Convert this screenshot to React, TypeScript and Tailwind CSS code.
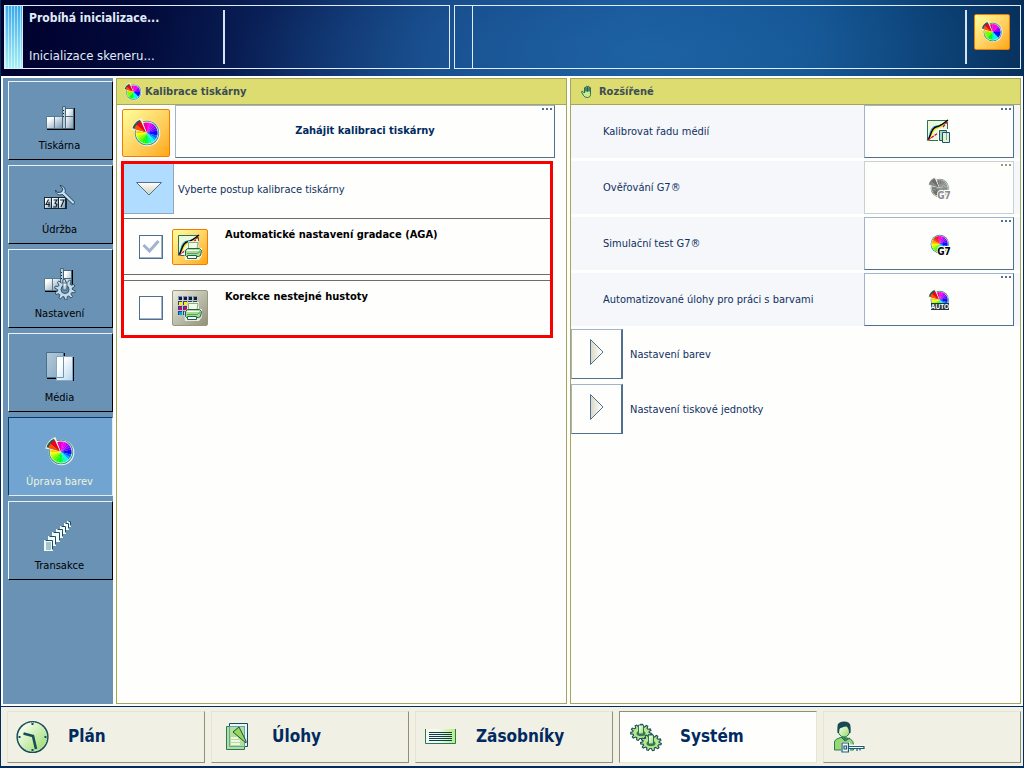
import type { ReactNode } from "react";

import { cva } from "class-variance-authority";
import { clsx } from "clsx";

type IconProps = {
  readonly className?: string;
};

type WheelProps = IconProps & {
  readonly gray?: boolean;
  readonly whole?: boolean;
  readonly steps?: number;
};

function point(cx: number, cy: number, r: number, deg: number) {
  const a = ((deg - 90) * Math.PI) / 180;
  return `${(cx + r * Math.cos(a)).toFixed(2)} ${(cy + r * Math.sin(a)).toFixed(2)}`;
}

function wedge(cx: number, cy: number, r: number, from: number, to: number) {
  const large = to - from > 180 ? 1 : 0;
  return `M${cx} ${cy}L${point(cx, cy, r, from)}A${r} ${r} 0 ${large} 1 ${point(cx, cy, r, to)}Z`;
}

function gear(rx: number, ry: number, depth: number, teeth: number) {
  const step = 360 / teeth;
  const points = Array.from({ length: teeth }, (_, i) =>
    [
      [0, 0],
      [0.2, depth],
      [0.5, depth],
      [0.7, 0],
    ].map(([t, d]) => {
      const a = ((i + t) * step * Math.PI) / 180;
      return `${((rx + d) * Math.cos(a)).toFixed(2)} ${((ry + d) * Math.sin(a)).toFixed(2)}`;
    }),
  );
  return `M${points.flat().join("L")}Z`;
}

/* Hues run clockwise from magenta at the top through blue, cyan, green and yellow. */
function hue(deg: number) {
  const stops = [
    [0, 305],
    [45, 275],
    [90, 235],
    [135, 182],
    [180, 125],
    [225, 90],
    [270, 48],
    [315, 5],
    [360, -55],
  ];
  const i = Math.min(Math.floor(deg / 45), 7);
  const t = (deg - stops[i][0]) / 45;
  return stops[i][1] + (stops[i + 1][1] - stops[i][1]) * t;
}

function ColorWheel({ className, gray, whole, steps = 24 }: WheelProps) {
  const size = 360 / steps;
  const fill = (deg: number) => (gray ? `hsl(0 0% ${48 + 10 * Math.sin(deg / 40)}%)` : `hsl(${hue(deg)} 100% 50%)`);
  const slices = Array.from({ length: steps }, (_, i) => i * size);
  return (
    <svg viewBox="0 1.5 32 32" className={clsx("overflow-visible", className)} aria-hidden="true">
      <circle cx="17.5" cy="18" r="12.8" fill="#eaf6f4" />
      <circle cx="17" cy="17.5" r="12.2" fill={gray ? "#8a8a8a" : "#2a8478"} />
      <circle cx="17" cy="17.5" r="11.4" fill="#e6f5dc" />
      {slices
        .filter((a) => whole || a < 285)
        .map((a) => (
          <path key={a} d={wedge(17, 17.5, 10.6, a, a + size + 0.6)} fill={fill(a)} />
        ))}
      {!whole && (
        <>
          <path d={wedge(17, 17.5, 10.6, 335, 360)} fill={gray ? "#777" : "#f000a0"} />
          <path d={wedge(16.5, 17, 15.4, 281, 341)} fill="#f4f4e0" />
          <path d={wedge(15.4, 16.4, 13.4, 286, 336)} fill={gray ? "#777" : "#1c5c50"} />
          <path d={wedge(15.8, 16.8, 12, 286, 311)} fill={gray ? "#8c8c8c" : "#ff5000"} />
          <path d={wedge(15.8, 16.8, 12, 311, 336)} fill={gray ? "#6c6c6c" : "#f00020"} />
        </>
      )}
    </svg>
  );
}

function PrinterTowerShapes() {
  return (
    <>
      <path d="M3 15h28v14H3z" fill="#000" />
      <path d="M20 7h11v22H20z" fill="#000" />
      <path d="M2.500 15.500h8v12h-8zM10.500 15.500h8v12h-8z" fill="url(#steel)" stroke="#55798f" />
      <path d="M21.500 7.500h8v8h-8zM21.500 15.500h8v12h-8z" fill="url(#steel)" stroke="#46687f" />
      <path d="M18.500 5.500h3v22h-3z" fill="#b9cddb" stroke="#46687f" />
      <path d="M19.500 9v9" stroke="#102030" strokeDasharray="1 2" />
    </>
  );
}

function PrinterIcon({ className }: IconProps) {
  return (
    <svg viewBox="0 -1 32 32" className={className} aria-hidden="true">
      <PrinterTowerShapes />
    </svg>
  );
}

function MaintenanceIcon({ className }: IconProps) {
  return (
    <svg viewBox="0 2 32 32" className={className} aria-hidden="true">
      <path d="M0 15h23v12H0z" fill="#142838" />
      {[1, 8, 15].map((x) => (
        <path key={x} d={`M${x} 16h6v10h-6z`} fill="url(#steel)" />
      ))}
      <path d="M4.500 17.500 2 22.500h4M5 20v5M9.500 18h3.500l-2 3 2 1.500-1 2.500H9M16 18h4l-3 7" fill="none" stroke="#10202c" strokeWidth="1.100" />
      <path
        d="M18.500 12.500 28 21.500c1.500 1.500 3.500-.500 2-2L21 10.500c1-3-.500-6.500-5-7l3 3.500-1.500 3-4 .500L11.500 8c0 3.500 3 6 7 4.500z"
        fill="#c8e0f0"
        stroke="#1f4258"
        strokeWidth="1"
      />
    </svg>
  );
}

function SettingsIcon({ className }: IconProps) {
  return (
    <svg viewBox="0 0 32 32" className={className} aria-hidden="true">
      <g transform="translate(-2 -5)">
        <PrinterTowerShapes />
      </g>
      <g transform="translate(21 21.500)">
        <path d={gear(7.4, 7.4, 3, 10)} fill="#c5dae8" stroke="#33566b" />
        <circle r="4" fill="#6992b5" stroke="#33566b" />
      </g>
      <path d="M19 15h4v7h-4z" fill="url(#steel)" stroke="#33566b" strokeWidth="0.8" />
    </svg>
  );
}

function MediaIcon({ className }: IconProps) {
  return (
    <svg viewBox="0 1 32 32" className={className} aria-hidden="true">
      <path d="M3 2h18v26H3z" fill="#000" />
      <path d="M2.500 1.500h17v25h-17z" fill="url(#sheet)" stroke="#44708c" />
      <path d="M13 6h17v24H13z" fill="#000" />
      <path d="M12.500 5.500h16v24h-16z" fill="url(#sheetLight)" stroke="#88a8be" />
      <path d="M19.500 6v20.500H13" fill="none" stroke="#6d93ad" />
    </svg>
  );
}

function TransactionIcon({ className }: IconProps) {
  const sheets = [
    [23, 1, 4],
    [20, 3, 5],
    [16, 6, 6],
    [12, 9, 7],
    [8, 12, 8],
    [4, 16, 8],
    [0, 20, 9],
  ];
  return (
    <svg viewBox="0 0 32 32" className={className} aria-hidden="true">
      {sheets.map(([x, y, s]) => (
        <g key={x}>
          <path d={`M${x} ${y}h${s}v${s + 2}h${-s}z`} fill="#f0fafa" />
          <path d={`M${x + 1.5} ${y + 0.5}h${s - 2}v${s}`} fill="none" stroke="#1f4d5c" />
        </g>
      ))}
      <path d="M2 23h5M2 25h5M2 27h5M2 29h5" stroke="#5892a8" strokeWidth="1" />
    </svg>
  );
}

function CurveShapes() {
  return (
    <>
      <path d="M2.500 2.500h20v20h-20z" fill="#edf8dc" stroke="#28735c" />
      <path d="M2 23C6 18 4 9 11 8s7-3 12-6" fill="none" stroke="#18a8e0" />
      <path d="M3 23C7 18 7 11 12 10s6-3 11-7" fill="none" stroke="#f4e000" strokeWidth="1.300" />
      <path d="M3 22C6 18 6 10 11 9s7-3 12-7" fill="none" stroke="#000" strokeWidth="1.400" />
      <path d="M3 22 13 15M18 9l4-5" stroke="#d00060" strokeDasharray="3 1" strokeWidth="1.300" />
    </>
  );
}

function MiniPrinterShapes() {
  return (
    <>
      <path d="M12 8h11v7h3v8l-3 4H9l-1-9 3-3z" fill="#f4faf0" opacity="0.8" />
      <path d="M12.500 16V9.500H22l-1 6.500z" fill="#f2fbe8" stroke="#8cae80" />
      <path d="m9.500 17.500 2-2h12l2 2-1 5-2 1h-12l-1-1z" fill="#a6dc8c" stroke="#1d6550" />
      <path d="M11 17.500h12" stroke="#fff" />
      <path d="M11 20.500h10l3-2" fill="none" stroke="#5ca268" />
      <path d="M11.500 22.500h9v3h-9z" fill="#f6faf0" stroke="#1d6550" />
    </>
  );
}

function GradationIcon({ className }: IconProps) {
  return (
    <svg viewBox="0 0 28 28" className={className} aria-hidden="true">
      <CurveShapes />
      <MiniPrinterShapes />
    </svg>
  );
}

function DensityIcon({ className }: IconProps) {
  const rows = ["#141c38", "#fff000", "#d80070", "#00a4dc"];
  return (
    <svg viewBox="0 0 28 28" className={className} aria-hidden="true">
      {rows.map((color, r) =>
        [2, 7, 12, 17].map((x) => (
          <g key={`${color}-${x}`}>
            <path d={`M${x} ${2 + r * 5}h4v4h-4z`} fill={r === 0 ? "#7894ac" : "#244090"} />
            <path d={`M${x + 1} ${3 + r * 5}h3v3h-3z`} fill={color} />
          </g>
        )),
      )}
      <MiniPrinterShapes />
    </svg>
  );
}

function MediaCurveIcon({ className }: IconProps) {
  return (
    <svg viewBox="0 0 28 28" className={className} aria-hidden="true">
      <CurveShapes />
      <path d="M13 11h10v2h4v14h-9v-2h-5z" fill="#fff" />
      <path d="M14.500 12.500h7v10h-7z" fill="#a4d8b8" stroke="#1d5464" />
      <path d="M17.500 14.500h7v10h-7z" fill="#dff5d0" stroke="#1d5464" />
      <path d="M21.500 15v7" stroke="#88a0c8" />
    </svg>
  );
}

function G7Icon({ className, gray }: IconProps & { readonly gray?: boolean }) {
  return (
    <span className={clsx("relative block", className)} aria-hidden="true">
      <ColorWheel gray={gray} whole={!gray} className="size-6" />
      <svg viewBox="0 0 14 12" className="absolute right-0 bottom-0 h-3 w-3.5">
        <text
          x="7"
          y="10.500"
          textAnchor="middle"
          fontSize="10"
          fontWeight="bold"
          fontFamily="DejaVu Sans Condensed, sans-serif"
          fill={gray ? "#8a8a8a" : "#000"}
          stroke="#fff"
          strokeWidth="2"
          paintOrder="stroke"
        >
          G7
        </text>
      </svg>
    </span>
  );
}

function AutoIcon({ className }: IconProps) {
  return (
    <span className={clsx("relative block", className)} aria-hidden="true">
      <ColorWheel className="size-6" />
      <svg viewBox="0 0 18 7" className="absolute right-0.5 bottom-0.5 h-[7px] w-[18px]">
        <path d="M0 0h18v7H0z" fill="#24343c" />
        <text x="9" y="6" textAnchor="middle" fontSize="6.500" fontWeight="bold" fontFamily="Liberation Sans, sans-serif" fill="#fff">
          AUTO
        </text>
      </svg>
    </span>
  );
}

function HandIcon({ className }: IconProps) {
  return (
    <svg viewBox="0 0 14 14" className={className} aria-hidden="true">
      <path
        d="M4.500 8V3c0-1 1.500-1 1.500 0v3.500V2c0-1 1.500-1 1.500 0v4.500V2c0-1 1.500-1 1.500 0v4.500V3c0-1 1.500-1 1.500 0v6.500c0 2-1.500 3-3 3S4.500 12 3.500 10.500L1.500 7c0-1 1-1 2 0z"
        fill="#c4ec90"
        stroke="#1c5c50"
        strokeWidth="0.9"
      />
    </svg>
  );
}

function ClockIcon({ className }: IconProps) {
  return (
    <svg viewBox="0 0 34 34" className={className} aria-hidden="true">
      <circle cx="16.500" cy="17" r="15.300" fill="url(#lime)" stroke="#174c58" strokeWidth="1.600" />
      <circle cx="16.500" cy="17" r="14.200" fill="none" stroke="#e8f8e0" strokeDasharray="1 1" />
      <path d="M15.500 3h2v2h-2zM15.500 29h2v2h-2zM2.500 16h2v2h-2zM28.500 16h2v2h-2z" fill="#174c58" />
      <path d="M7.500 13.500 17 16l3 13" fill="none" stroke="#174c58" strokeWidth="2.600" />
    </svg>
  );
}

function JobsIcon({ className }: IconProps) {
  return (
    <svg viewBox="0 0 34 34" className={className} aria-hidden="true">
      <path d="M9.500 3.500h18v23h-18z" fill="#e8f5f8" stroke="#174c58" />
      <path d="M6.500 6.500h18v23h-18z" fill="#a9dc84" fillOpacity="0.85" stroke="#28795c" />
      <path d="M9.500 6.500h15v20h-15z" fill="none" stroke="#67a2b4" />
      <path d="M11 18h7M11 21h9M11 24h9" stroke="#fff" strokeWidth="1.400" />
      <path d="m13 12 6-5 7 14v2z" fill="#98d858" stroke="#174c58" strokeWidth="1" />
    </svg>
  );
}

function TrayIcon({ className }: IconProps) {
  return (
    <svg viewBox="0 0 34 34" className={className} aria-hidden="true">
      <path d="M2 9v15h30V9" fill="url(#tray)" />
      <path d="M1.500 9v14.500h30V9" fill="none" stroke="#28785c" />
      <path d="M5 12.500h23M5 14.500h23M5 16.500h23M5 18.500h23M5 20.500h23" stroke="#0e3a50" />
    </svg>
  );
}

function GearShapes() {
  return (
    <>
      <path d={gear(8.2, 6, 2.2, 11)} fill="#b8e68c" stroke="#174c58" strokeWidth="1.1" />
      <ellipse cy="1" rx="4.500" ry="2.800" fill="#387c58" />
      <path d="M-2.500-7.500h5V1.500h-5z" fill="url(#lime)" stroke="#2c7454" strokeWidth="1" />
    </>
  );
}

function GearsIcon({ className }: IconProps) {
  return (
    <svg viewBox="0 0 34 34" className={className} aria-hidden="true">
      <g transform="translate(13 12.500)">
        <GearShapes />
      </g>
      <g transform="translate(23 22.500)">
        <GearShapes />
      </g>
    </svg>
  );
}

function UserKeyIcon({ className }: IconProps) {
  return (
    <svg viewBox="0 0 34 34" className={className} aria-hidden="true">
      <path d="M2.500 30V22q0-3 8-5l8 2q3 2 3 6v5z" fill="#98d870" stroke="#2c7858" />
      <path d="m9 17 4 4 5-3" fill="#3d8850" stroke="#28705a" />
      <ellipse cx="12" cy="10" rx="6" ry="7" fill="url(#lime)" stroke="#2c7858" />
      <path d="M5.500 13V6q0-4 6-4.500 7 0 7 5V13h-1.500q0-5-2.500-6.500-5 .500-7 2.500l-.500 4z" fill="#174854" />
      <path d="M9 22h9v2.500h15.500v3.500l-1 1H18v4H9z" fill="#f4f8fa" />
      <path
        d="M10 23h6.500v9H10zM12 26h2.500v3H12zM17 26.500h15.500M17 28.500h15v-2M25 29v2M28 29v1.500"
        fill="none"
        stroke="#1d5c70"
        strokeWidth="1.200"
      />
    </svg>
  );
}

/* Gradients shared by all the icons. */
function IconGradients() {
  return (
    <svg className="absolute size-0" aria-hidden="true">
      <defs>
        <linearGradient id="steel" x1="0" y1="0" x2="1" y2="1">
          <stop offset="0.2" stopColor="#fff" />
          <stop offset="1" stopColor="#7a98b0" />
        </linearGradient>
        <linearGradient id="sheet" x1="0" y1="0" x2="1" y2="1">
          <stop offset="0" stopColor="#b4cad8" />
          <stop offset="1" stopColor="#86a8c4" />
        </linearGradient>
        <linearGradient id="sheetLight" x1="0" y1="0" x2="1" y2="1">
          <stop offset="0.3" stopColor="#fff" />
          <stop offset="1" stopColor="#b0d4f0" />
        </linearGradient>
        <linearGradient id="lime" x1="0" y1="0" x2="1" y2="1">
          <stop offset="0.2" stopColor="#f2fce8" />
          <stop offset="1" stopColor="#90d860" />
        </linearGradient>
        <linearGradient id="tray">
          <stop offset="0.4" stopColor="#f4faf0" />
          <stop offset="1" stopColor="#b4ec78" />
        </linearGradient>
        <linearGradient id="arrow">
          <stop offset="0" stopColor="#d8d8c4" />
          <stop offset="0.9" stopColor="#fff" />
        </linearGradient>
        <linearGradient id="arrowDown" x1="0" y1="0" x2="0" y2="1">
          <stop offset="0" stopColor="#fff" />
          <stop offset="0.8" stopColor="#d8d8c4" />
        </linearGradient>
      </defs>
    </svg>
  );
}

const tile = cva("flex shrink-0 items-center justify-center rounded-xs border", {
  variants: {
    tone: {
      orange: "border-[#f47a00] bg-linear-to-br from-[#ffff9c] to-[#ffa800]",
      gray: "border-[#98987c] bg-linear-to-br from-[#ecece4] to-[#92927a]",
    },
    size: {
      sm: "size-9",
      lg: "size-12",
    },
  },
});

function Dots({ disabled }: { readonly disabled?: boolean }) {
  const dot = clsx("size-0.5", disabled ? "bg-[#98987c]" : "bg-[#50708e]");
  return (
    <span className="absolute top-0.5 right-0.5 flex gap-0.5" aria-hidden="true">
      <span className={dot} />
      <span className={dot} />
      <span className={dot} />
    </span>
  );
}

type PanelProps = {
  readonly title: string;
  readonly icon: ReactNode;
  readonly children: ReactNode;
};

function Panel({ title, icon, children }: PanelProps) {
  return (
    <section className="flex min-w-0 flex-1 flex-col border border-[#a6a65a] bg-[#fefefd]">
      <h2 className="flex h-[26px] items-center border-b border-[#a6a65a] bg-[#dcdc70] text-[11px] font-bold text-[#3c4c54]">
        <span className="flex w-7 justify-center pl-1">{icon}</span>
        <span className="pt-0.5">{title}</span>
      </h2>
      {children}
    </section>
  );
}

const sideItems = [
  { label: "Tiskárna", icon: <PrinterIcon className="size-8" /> },
  { label: "Údržba", icon: <MaintenanceIcon className="size-8" /> },
  { label: "Nastavení", icon: <SettingsIcon className="size-8" /> },
  { label: "Média", icon: <MediaIcon className="size-8" /> },
  { label: "Úprava barev", icon: <ColorWheel className="size-8" />, active: true },
  { label: "Transakce", icon: <TransactionIcon className="size-8" /> },
];

const advancedItems = [
  { label: "Kalibrovat řadu médií", icon: <MediaCurveIcon className="size-7" /> },
  { label: "Ověřování G7®", icon: <G7Icon gray className="size-6" />, disabled: true },
  { label: "Simulační test G7®", icon: <G7Icon className="size-6" /> },
  { label: "Automatizované úlohy pro práci s barvami", icon: <AutoIcon className="size-6" /> },
];

const procedures = [
  { id: "aga", label: "Automatické nastavení gradace (AGA)", icon: <GradationIcon className="size-7" />, checked: true },
  { id: "density", label: "Korekce nestejné hustoty", icon: <DensityIcon className="size-7" />, checked: false },
];

const tabs = [
  { label: "Plán", icon: <ClockIcon className="size-[34px]" /> },
  { label: "Úlohy", icon: <JobsIcon className="size-[34px]" /> },
  { label: "Zásobníky", icon: <TrayIcon className="size-[34px]" /> },
  { label: "Systém", icon: <GearsIcon className="size-[34px]" />, active: true },
  { label: "", icon: <UserKeyIcon className="size-[34px]" /> },
];

function StatusBar() {
  return (
    <header className="grid h-[76px] shrink-0 grid-cols-[446fr_568fr] gap-1 bg-[radial-gradient(ellipse_420px_110px_at_64%_70%,#2068a8aa,#2068a800),linear-gradient(100deg,#00002c_0%,#020a3a_14%,#0a2158_26%,#164584_42%,#18569a_62%,#11508e_78%,#083a6c_90%,#062c56_100%)] pt-[5px] pr-0.5 pb-[7px] pl-[3px]">
      <div className="flex border border-[#e0ecfa]">
        <div className="w-[18px] border-r border-[#e0ecfa] bg-[repeating-linear-gradient(90deg,#fff8_0_1px,#0000_1px_3px),linear-gradient(#38a8ec,#70ccf0,#a4f0f4)]" />
        <div className="my-1 flex w-[202px] flex-col justify-between border-r-2 border-[#d4e4f8] pl-1.5 text-[#e0ecfa]">
          <h1 className="text-[12px] leading-4 font-bold">Probíhá inicializace...</h1>
          <p className="text-[13px] leading-4">Inicializace skeneru...</p>
        </div>
      </div>
      <div className="flex border border-[#e0ecfa]">
        <div className="w-[18px] border-r border-[#e0ecfa]" />
        <div className="my-1 ml-auto flex border-l-2 border-[#d4e4f8] pt-1 pr-2.5 pl-[7px]">
          <button type="button" aria-label="Úprava barev" className={tile({ tone: "orange", size: "sm" })}>
            <ColorWheel steps={8} className="size-6" />
          </button>
        </div>
      </div>
    </header>
  );
}

function SideNav() {
  return (
    <nav className="flex w-[110px] shrink-0 flex-col gap-[5px] bg-[#6992b5] pt-[3px] pl-[5px]">
      {sideItems.map(({ label, icon, active }) => (
        <button
          key={label}
          type="button"
          className={clsx(
            "flex h-[79px] flex-col items-center border pt-[18px] pr-0.5 text-[11px]",
            active
              ? "border-t-[#06386c] border-r-[#e0ecf8] border-b-[#e0ecf8] border-l-[#06386c] bg-[#72a4d2] text-[#ecf4d8]"
              : "border-t-[#e8f2fa] border-r-black border-b-black border-l-[#e8f2fa] text-black",
          )}
        >
          {icon}
          <span className="mt-1.5 leading-4">{label}</span>
        </button>
      ))}
    </nav>
  );
}

function CalibrationPanel() {
  return (
    <Panel title="Kalibrace tiskárny" icon={<ColorWheel steps={8} className="size-5" />}>
      <div className="mr-[11px] ml-[5px] flex items-end gap-[5px]">
        <button type="button" aria-label="Kalibrace" className={clsx("mb-px", tile({ tone: "orange", size: "lg" }))}>
          <ColorWheel className="size-8" />
        </button>
        <button
          type="button"
          className="relative h-[53px] flex-1 border border-t-[#a2b4cc] border-r-[#50708e] border-b-[#50708e] border-l-[#a2b4cc] text-[11px] font-bold text-[#002a60]"
        >
          Zahájit kalibraci tiskárny
          <Dots />
        </button>
      </div>
      <div className="mt-[3px] mr-[13px] ml-1 border-3 border-[#f80000]">
        <div className="flex items-center">
          <button
            type="button"
            aria-label="Sbalit"
            className="flex size-[50px] items-center justify-center border-r border-b border-[#90a8c4] bg-[#b0dcff]"
          >
            <svg viewBox="0 0 26 14" className="h-3.5 w-[26px]">
              <path d="M.5.5h25L13 13z" fill="url(#arrowDown)" stroke="#50708e" />
            </svg>
          </button>
          <span className="pt-0.5 pl-1 text-[11px] text-[#10305f]">Vyberte postup kalibrace tiskárny</span>
        </div>
        <div className="mt-1 flex flex-col gap-[5px]">
          {procedures.map(({ id, label, icon, checked }) => (
            <div
              key={id}
              className="flex h-[57px] items-center border-t border-b border-[#6c6c6c] pl-[15px] last:h-[55px] last:border-b-0"
            >
              <span className="relative size-6">
                <input
                  id={id}
                  type="checkbox"
                  defaultChecked={checked}
                  className="peer block size-6 appearance-none border border-[#50708e] bg-white shadow-[inset_-1px_-1px_#a2b4cc]"
                />
                <svg
                  viewBox="0 0 24 24"
                  className="pointer-events-none absolute inset-0 hidden size-6 peer-checked:block"
                  aria-hidden="true"
                >
                  <path d="m4.500 10 6 6 9-10" fill="none" stroke="#a2b4cc" strokeWidth="3" />
                </svg>
              </span>
              <span className={clsx("ml-[9px]", tile({ tone: checked ? "orange" : "gray", size: "sm" }))}>{icon}</span>
              <label htmlFor={id} className="ml-[17px] self-start pt-2 text-[11px] leading-4 font-bold text-black">
                {label}
              </label>
            </div>
          ))}
        </div>
      </div>
    </Panel>
  );
}

function AdvancedPanel() {
  return (
    <Panel title="Rozšířené" icon={<HandIcon className="size-3.5" />}>
      <ul className="flex flex-col gap-[3px]">
        {advancedItems.map(({ label, icon, disabled }) => (
          <li key={label} className="flex items-center justify-between bg-[#f5f7fa] pr-1.5 pl-8 text-[11px] text-[#10305f]">
            <span className="pt-0.5">{label}</span>
            <button
              type="button"
              aria-label={label}
              disabled={disabled}
              className={clsx(
                "relative flex h-[53px] w-[150px] items-center justify-center border bg-[#fefefd]",
                disabled
                  ? "border-[#c8d0d4]"
                  : "border-t-[#a2b4cc] border-r-[#50708e] border-b-[#50708e] border-l-[#a2b4cc]",
              )}
            >
              {icon}
              <Dots disabled={disabled} />
            </button>
          </li>
        ))}
      </ul>
      <div className="mt-[3px] flex flex-col gap-[5px]">
        {["Nastavení barev", "Nastavení tiskové jednotky"].map((label) => (
          <div key={label} className="flex items-center gap-[7px] text-[11px] text-[#10305f]">
            <button
              type="button"
              aria-label={label}
              className="flex h-[50px] w-[52px] items-center justify-center border border-r-2 border-t-[#a2b4cc] border-r-[#50708e] border-b-[#50708e] border-l-[#a2b4cc] pb-1"
            >
              <svg viewBox="0 0 14 26" className="h-[26px] w-3.5">
                <path d="M.5.5v25L13 13z" fill="url(#arrow)" stroke="#50708e" />
              </svg>
            </button>
            <span className="pt-0.5">{label}</span>
          </div>
        ))}
      </div>
    </Panel>
  );
}

function TabBar() {
  return (
    <nav className="grid shrink-0 grid-cols-5 gap-1.5 border-t border-[#002c60] bg-[#f0f0e4] pt-1 pr-0.5 pb-[3px] pl-1.5">
      {tabs.map(({ label, icon, active }) => (
        <button
          key={label}
          type="button"
          aria-label={label || "Uživatel"}
          className={clsx(
            "flex h-[52px] items-center gap-[18px] border pl-2 text-[17px] font-bold text-[#002a60]",
            active
              ? "border-t-[#909078] border-r-[#e6e6d0] border-b-[#e6e6d0] border-l-[#909078] bg-[#fefefd]"
              : "border-t-[#e6e6d0] border-r-[#909078] border-b-[#909078] border-l-[#e6e6d0]",
          )}
        >
          {icon}
          {label}
        </button>
      ))}
    </nav>
  );
}

export default function App() {
  return (
    <div className="flex min-h-screen flex-col border-x border-b-2 border-[#002c60] bg-[#fefefd] font-['DejaVu_Sans_Condensed','DejaVu_Sans',sans-serif]">
      <IconGradients />
      <StatusBar />
      <main className="flex flex-1 gap-[3px] p-0.5">
        <SideNav />
        <CalibrationPanel />
        <AdvancedPanel />
      </main>
      <TabBar />
    </div>
  );
}
